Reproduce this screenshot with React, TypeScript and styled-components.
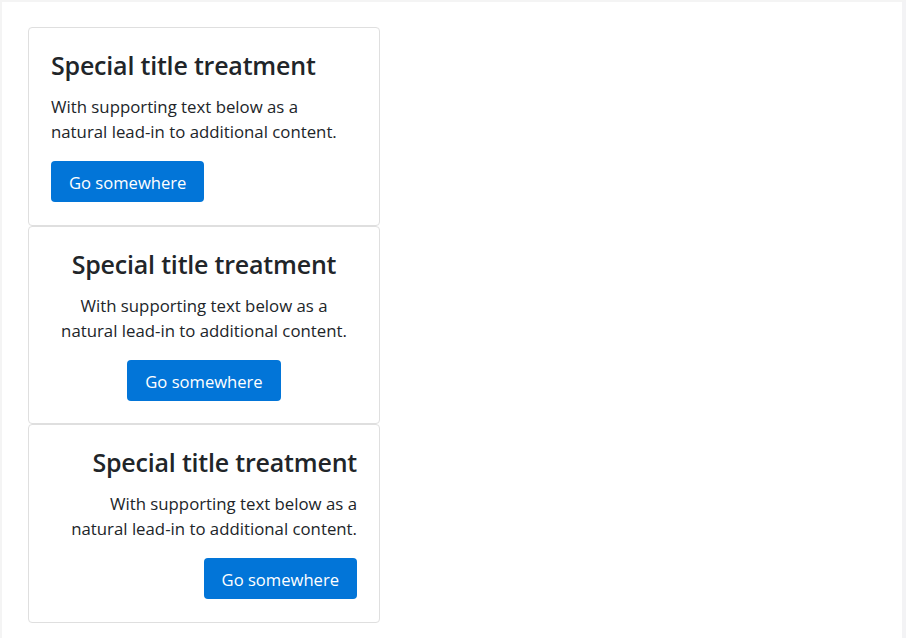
import React from "react";
import styled, { createGlobalStyle } from "styled-components";

const Global = createGlobalStyle`
  html, body { margin: 0; padding: 0; background: #ffffff; }
  body { font-family: "Open Sans", "Noto Sans", sans-serif; color: #212529; }
`;

const Page = styled.div`
  box-sizing: border-box;
  width: 906px;
  height: 638px;
  border-left: 2px solid #f4f4f4;
  border-top: 2px solid #f4f4f4;
  border-right: 4px solid #f3f3f5;
  padding: 25px 0 0 26px;
  display: flex;
  flex-direction: column;
`;

type Align = "left" | "center" | "right";

const Card = styled.div<{ $align: Align }>`
  box-sizing: border-box;
  width: 352px;
  border: 1px solid #dfdfdf;
  border-radius: 4px;
  padding: 22px 22px 22.6px;
  text-align: ${(p) => p.$align};
  background: #fff;
`;

const Title = styled.h5`
  margin: 0 0 14px;
  font-size: 25px;
  line-height: 30px;
  font-weight: 600;
  color: #212529;
  letter-spacing: -0.2px;
`;

const Text = styled.p`
  margin: 0 0 17px;
  font-size: 16.8px;
  line-height: 25px;
  color: #212529;
`;

const Button = styled.a`
  display: inline-block;
  box-sizing: border-box;
  height: 41px;
  padding: 2px 18px 0;
  line-height: 39px;
  font-size: 16.6px;
  color: #fff;
  background: #0275d8;
  border-radius: 4px;
  text-decoration: none;
  vertical-align: top;
`;

const aligns: Align[] = ["left", "center", "right"];

export default function App() {
  return (
    <>
      <Global />
      <Page>
        {aligns.map((a) => (
          <Card key={a} $align={a}>
            <Title>Special title treatment</Title>
            <Text>
              With supporting text below as a
              <br />
              natural lead-in to additional content.
            </Text>
            <Button href="#">Go somewhere</Button>
          </Card>
        ))}
      </Page>
    </>
  );
}
